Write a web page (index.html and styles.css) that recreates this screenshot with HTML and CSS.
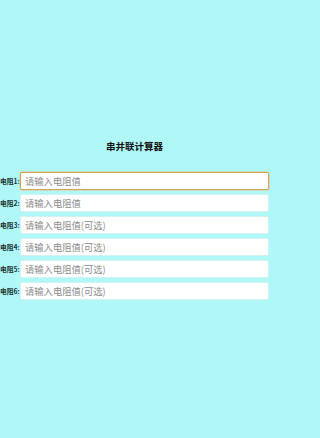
FILE: index.html
```html
<!DOCTYPE html>
<html lang="zh">
<head>
<meta charset="utf-8">
<title>串并联计算器</title>
<link rel="stylesheet" href="styles.css">
</head>
<body>
<div class="page">
  <h1 class="title">串并联计算器</h1>
  <div class="form">
    <div class="row"><label class="label">电阻1:</label><input class="field active" type="text" placeholder="请输入电阻值"></div>
    <div class="row"><label class="label">电阻2:</label><input class="field" type="text" placeholder="请输入电阻值"></div>
    <div class="row"><label class="label">电阻3:</label><input class="field" type="text" placeholder="请输入电阻值(可选)"></div>
    <div class="row"><label class="label">电阻4:</label><input class="field" type="text" placeholder="请输入电阻值(可选)"></div>
    <div class="row"><label class="label">电阻5:</label><input class="field" type="text" placeholder="请输入电阻值(可选)"></div>
    <div class="row"><label class="label">电阻6:</label><input class="field" type="text" placeholder="请输入电阻值(可选)"></div>
  </div>
</div>
</body>
</html>
```
FILE: styles.css
```css
html, body {
  margin: 0;
  padding: 0;
  height: 100%;
}
html {
  background: #b0f8f8;
}
body {
  background: #b0f8f8;
  font-family: "Noto Sans CJK SC", "Noto Sans", sans-serif;
}
.page {
  width: 270px;
  box-sizing: border-box;
  padding-top: 140px;
  padding-right: 1px;
}
.title {
  margin: 0;
  font-size: 9.5px;
  line-height: 12px;
  font-weight: bold;
  text-align: center;
  color: #111;
}
.form {
  margin-top: 20px;
  display: flex;
  flex-direction: column;
  gap: 4px;
}
.row {
  display: flex;
  align-items: center;
}
.label {
  width: 20px;
  flex: none;
  font-size: 6.8px;
  font-weight: bold;
  color: #1a3333;
  white-space: nowrap;
}
.field {
  flex: 1;
  min-width: 0;
  box-sizing: border-box;
  height: 18px;
  margin: 0;
  padding: 0 4px;
  border: 1px solid #d4f2f2;
  border-radius: 2px;
  background: #fff;
  font-family: inherit;
  font-size: 9.3px;
  color: #333;
  outline: none;
}
.field::placeholder {
  color: #8c8c8c;
}
.field.active {
  border-color: #d4a45a;
  box-shadow: 0 0 0 0.5px #e8c27c;
}
```
